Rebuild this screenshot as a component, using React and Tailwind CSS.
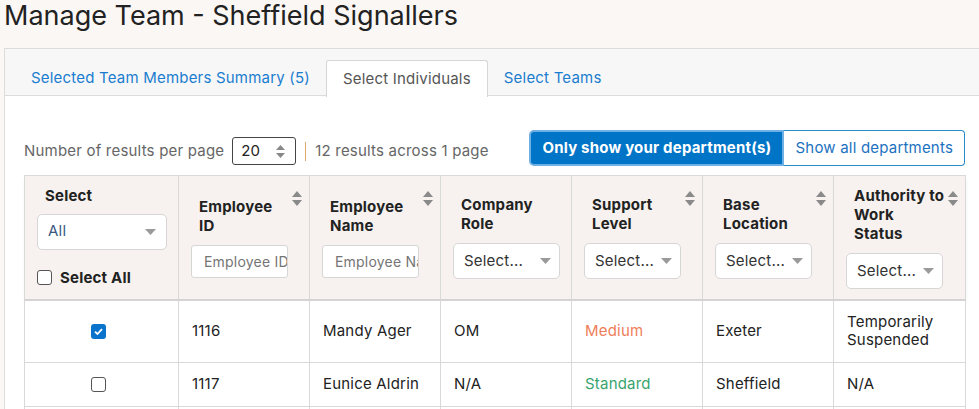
const SortIcon = () => (
  <svg width="10" height="15" viewBox="0 0 10 15" className="absolute top-[15px] right-[7px]">
    <path d="M5 0 L10 6 L0 6 Z" fill="#8a8a8a" />
    <path d="M0 9 L10 9 L5 15 Z" fill="#8a8a8a" />
  </svg>
)

const Caret = () => (
  <svg width="11" height="6" viewBox="0 0 11 6">
    <path d="M0 0 L11 0 L5.5 6 Z" fill="#9a9a9a" />
  </svg>
)

const SelectBox = ({ w = 'w-[107px]' }) => (
  <div className={`${w} h-[36px] bg-white border border-[#d6d6d6] rounded-[5px] flex items-center justify-between pl-[10px] pr-[8px]`}>
    <span className="text-[15px] text-[#333]">Select...</span>
    <Caret />
  </div>
)

const Title = ({ children }) => (
  <div className="pl-2 pr-2 font-bold text-[15px] leading-[19px] text-[#222] mb-[10px]">{children}</div>
)

const TextFilter = ({ placeholder }) => (
  <div className="w-[97px] h-[33px] bg-white border border-[#d6d6d6] rounded-[3px] pl-[12px] flex items-center overflow-hidden whitespace-nowrap text-[14px] text-[#757575]">{placeholder}</div>
)

const Checkbox = ({ checked }) =>
  checked ? (
    <span className="inline-flex w-[15px] h-[15px] rounded-[3px] bg-[#0a74cc] items-center justify-center">
      <svg width="9" height="7" viewBox="0 0 9 7">
        <path d="M1 3.6 L3.4 6 L8 1.2" stroke="white" strokeWidth="1.8" fill="none" />
      </svg>
    </span>
  ) : (
    <span className="inline-block w-[15px] h-[15px] rounded-[3px] border border-[#555] bg-white" />
  )

const rows = [
  { checked: true, id: '1116', name: 'Mandy Ager', role: 'OM', level: 'Medium', levelCls: 'text-[#ef7e58]', base: 'Exeter', auth: 'Temporarily Suspended' },
  { checked: false, id: '1117', name: 'Eunice Aldrin', role: 'N/A', level: 'Standard', levelCls: 'text-[#38a46e]', base: 'Sheffield', auth: 'N/A' },
  { checked: false, id: '1118', name: 'Harold Ames', role: 'N/A', level: 'Standard', levelCls: 'text-[#38a46e]', base: 'Sheffield', auth: 'N/A' },
]

export default function App() {
  const th = 'relative border border-[#d9d9d9] px-3 align-middle text-left font-normal'
  const td = 'border border-[#d9d9d9] px-[13px] py-[12.5px] text-[15px] leading-[18px] align-middle'
  return (
    <div className="w-full h-[409px] overflow-hidden bg-[#faf7f5] tracking-[0.2px]" style={{ fontFamily: 'Inter, "Noto Sans", sans-serif' }}>
      <h1 className="pl-[4px] pt-[0px] text-[27px] leading-[32px] text-[#222] tracking-normal">Manage Team - Sheffield Signallers</h1>
      <div className="ml-[4px] mt-[16px] w-[1000px] border border-[#dcdcdc] bg-white">
        <div className="bg-[#f7f7f7] border-b border-[#dcdcdc] pt-[11px] pl-[10px] flex h-[47px]">
          <div className="px-4 h-[36px] flex items-center text-[15px] text-[#1a7dd0]">Selected Team Members Summary (5)</div>
          <div className="px-4 h-[37px] flex items-center text-[15px] text-[#555] bg-white border border-[#d6d6d6] border-b-0 rounded-t-[3px]">Select Individuals</div>
          <div className="px-4 h-[36px] flex items-center text-[15px] text-[#1a7dd0]">Select Teams</div>
        </div>
        <div className="pl-[19px] pt-[34px]">
          <div className="w-[941px] flex items-end justify-between mb-[9px]">
            <div className="flex items-center text-[15px] text-[#666] pb-[1px]">
              <span>Number of results per page</span>
              <div className="ml-[8px] w-[64px] h-[28px] border border-[#444] rounded-[3px] flex items-center justify-between pl-[8px] pr-[10px] text-[#222]">
                <span>20</span>
                <svg width="9" height="13" viewBox="0 0 9 13">
                  <path d="M4.5 0 L9 5 L0 5 Z" fill="#888" />
                  <path d="M0 8 L9 8 L4.5 13 Z" fill="#888" />
                </svg>
              </div>
              <span className="ml-[9px] w-[1px] h-[19px] bg-[#e2a86a]" />
              <span className="ml-[9px]">12 results across 1 page</span>
            </div>
            <div className="flex items-stretch h-[36px]">
              <button className="h-full px-[11px] bg-[#0074c6] text-white font-bold text-[15px] rounded-l-[5px] border-[2px] border-[#6fb0e4]">Only show your department(s)</button>
              <button className="h-full px-[11px] bg-white text-[#1c72c0] text-[15px] border border-[#2a8bc8] border-l-0 rounded-r-[4px]">Show all departments</button>
            </div>
          </div>
          <table className="table-fixed border-collapse w-[941px]">
            <colgroup>
              <col className="w-[154px]" />
              <col className="w-[131px]" />
              <col className="w-[131px]" />
              <col className="w-[131px]" />
              <col className="w-[131px]" />
              <col className="w-[131px]" />
              <col className="w-[132px]" />
            </colgroup>
            <thead>
              <tr className="h-[124px] bg-[#f7f2ef] border-b-2 border-b-[#d4d4d4] shadow-[0_3px_4px_rgba(0,0,0,0.06)]">
                <th className={th}>
                  <div className="pl-2 font-bold text-[15px] leading-[19px] text-[#222]">Select</div>
                  <div className="mt-[9px] w-[130px] h-[36px] bg-white border border-[#d6d6d6] rounded-[5px] flex items-center justify-between pl-[10px] pr-[10px]">
                    <span className="text-[15px] text-[#39597f]">All</span>
                    <Caret />
                  </div>
                  <label className="mt-[17px] flex items-center gap-[8px]">
                    <Checkbox />
                    <span className="font-bold text-[15px] text-[#222]">Select All</span>
                  </label>
                </th>
                <th className={th}>
                  <SortIcon />
                  <Title>Employee ID</Title>
                  <TextFilter placeholder="Employee ID" />
                </th>
                <th className={th}>
                  <SortIcon />
                  <Title>Employee Name</Title>
                  <TextFilter placeholder="Employee Name" />
                </th>
                <th className={th}>
                  <Title>Company Role</Title>
                  <SelectBox />
                </th>
                <th className={th}>
                  <SortIcon />
                  <Title>Support Level</Title>
                  <SelectBox w="w-[97px]" />
                </th>
                <th className={th}>
                  <SortIcon />
                  <Title>Base Location</Title>
                  <SelectBox w="w-[97px]" />
                </th>
                <th className={th}>
                  <SortIcon />
                  <Title>Authority to Work Status</Title>
                  <SelectBox w="w-[97px]" />
                </th>
              </tr>
            </thead>
            <tbody className="text-[#222]">
              {rows.map((r) => (
                <tr key={r.id} className="bg-white">
                  <td className={`${td} pl-[66px]`}>
                    <span className="inline-flex align-middle"><Checkbox checked={r.checked} /></span>
                  </td>
                  <td className={td}>{r.id}</td>
                  <td className={td}>{r.name}</td>
                  <td className={td}>{r.role}</td>
                  <td className={`${td} ${r.levelCls}`}>{r.level}</td>
                  <td className={td}>{r.base}</td>
                  <td className={`${td} px-[12px]`}>{r.auth}</td>
                </tr>
              ))}
            </tbody>
          </table>
        </div>
      </div>
    </div>
  )
}
